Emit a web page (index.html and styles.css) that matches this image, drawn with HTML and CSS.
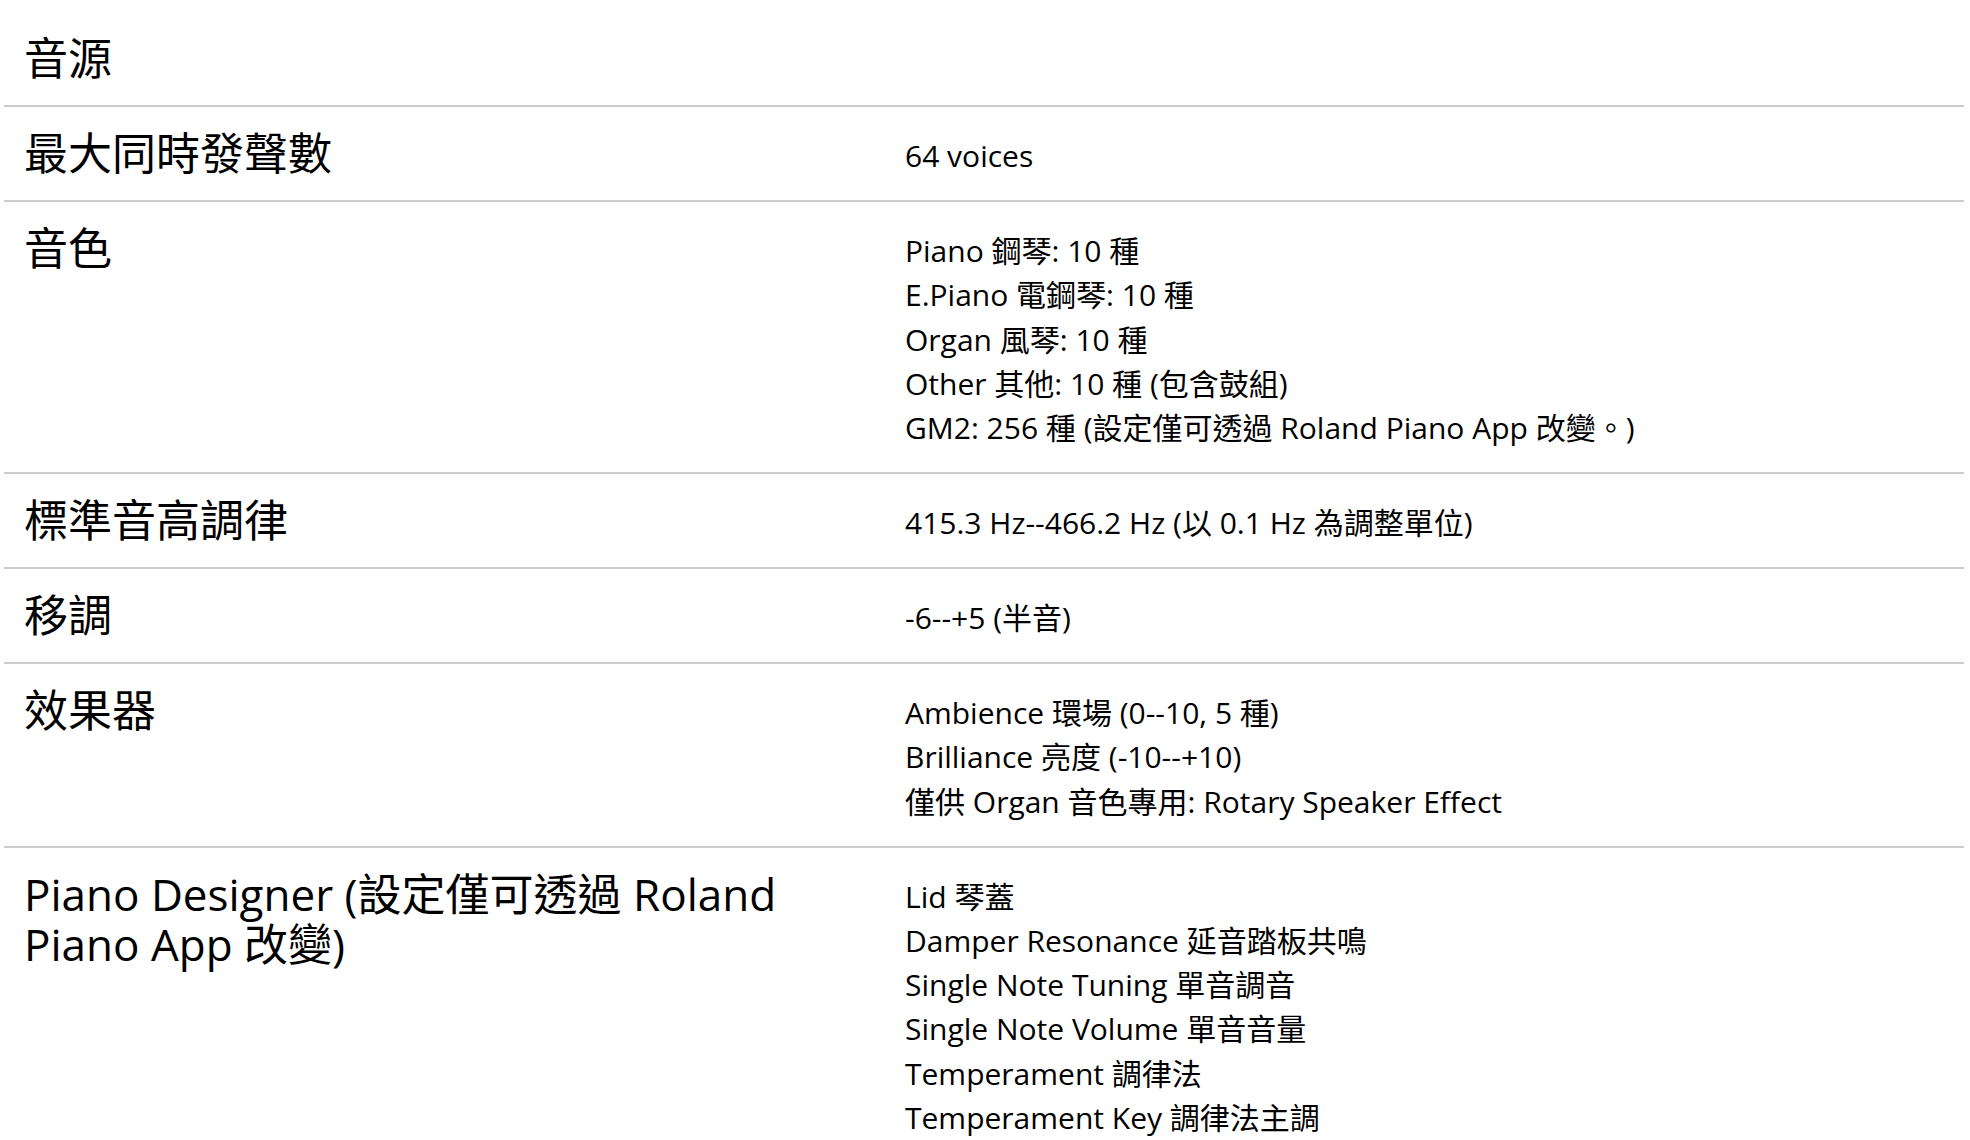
FILE: index.html
```html
<!DOCTYPE html>
<html lang="zh-Hant">
<head>
<meta charset="utf-8">
<title>規格</title>
<link rel="stylesheet" href="styles.css">
</head>
<body>
<div class="specs">
  <div class="spec-row spec-head">
    <div class="spec-label">音源</div>
    <div class="spec-value"></div>
  </div>
  <div class="spec-row">
    <div class="spec-label">最大同時發聲數</div>
    <div class="spec-value">64 voices</div>
  </div>
  <div class="spec-row">
    <div class="spec-label">音色</div>
    <div class="spec-value">Piano 鋼琴: 10 種<br>E.Piano 電鋼琴: 10 種<br>Organ 風琴: 10 種<br>Other 其他: 10 種 (包含鼓組)<br>GM2: 256 種 (設定僅可透過 Roland Piano App 改變。)</div>
  </div>
  <div class="spec-row">
    <div class="spec-label">標準音高調律</div>
    <div class="spec-value">415.3 Hz--466.2 Hz (以 0.1 Hz 為調整單位)</div>
  </div>
  <div class="spec-row">
    <div class="spec-label">移調</div>
    <div class="spec-value">-6--+5 (半音)</div>
  </div>
  <div class="spec-row">
    <div class="spec-label">效果器</div>
    <div class="spec-value">Ambience 環場 (0--10, 5 種)<br>Brilliance 亮度 (-10--+10)<br>僅供 Organ 音色專用: Rotary Speaker Effect</div>
  </div>
  <div class="spec-row">
    <div class="spec-label">Piano Designer (設定僅可透過 Roland Piano App 改變)</div>
    <div class="spec-value">Lid 琴蓋<br>Damper Resonance 延音踏板共鳴<br>Single Note Tuning 單音調音<br>Single Note Volume 單音音量<br>Temperament 調律法<br>Temperament Key 調律法主調</div>
  </div>
</div>
</body>
</html>
```

FILE: styles.css
```css
html, body {
  margin: 0;
  padding: 0;
  background: #ffffff;
}

body {
  font-family: "Open Sans", "Noto Sans CJK TC", sans-serif;
  color: #000000;
  overflow: hidden;
}

.specs {
  margin: 12px 6px 0 4px;
}

.spec-row {
  display: grid;
  grid-template-columns: 45% 55%;
  border-bottom: 2px solid #cccccc;
  min-height: 93px;
}

.spec-label {
  font-size: 44px;
  line-height: 50px;
  padding: 21px 20px 22px 20px;
}

.spec-value {
  font-size: 30px;
  line-height: 44.25px;
  padding: 27px 20px 21.75px 19px;
}
```
